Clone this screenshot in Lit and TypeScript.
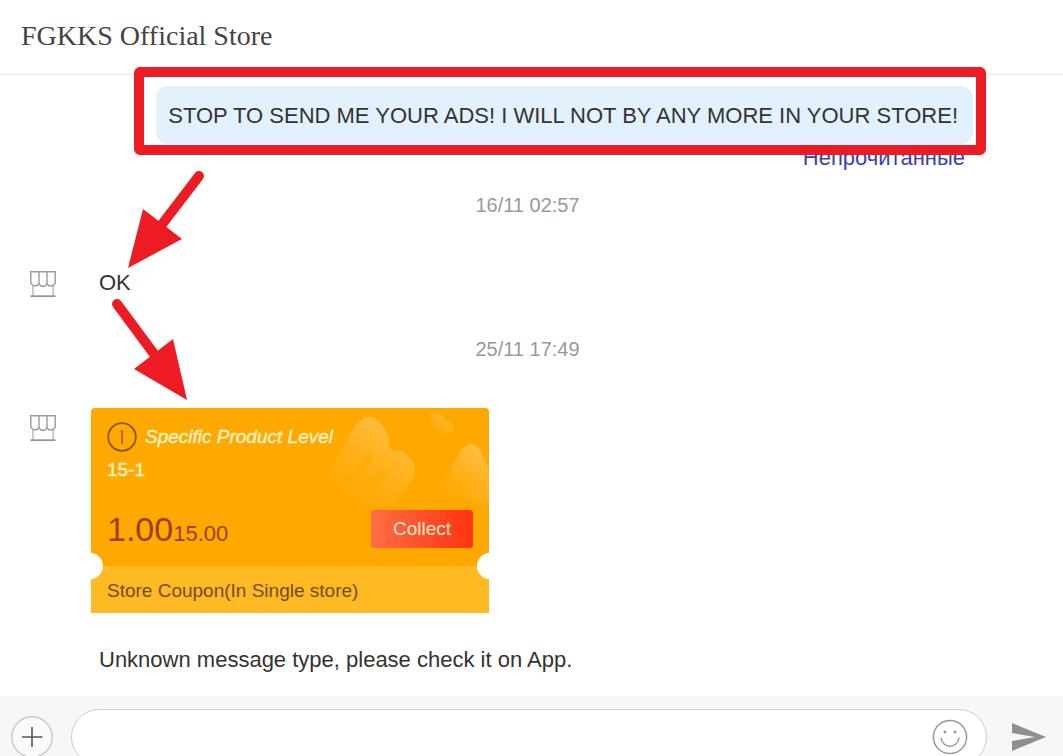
import { LitElement, html, css, svg } from "lit";
import { customElement, property } from "lit/decorators.js";

const storeIcon = html`<svg class="shop" viewBox="0 0 28 28" width="28" height="28" role="img" aria-label="Store">
  <g fill="none" stroke="#999" stroke-width="1.4">
    <path d="M1.800 1.800H26.200V13.500L23.500 15.800H20L18 13.800L15.800 16.200H12.200L10 13.800L8 15.800H4.500L1.800 13.500Z" />
    <path d="M10 2V13.500M18 2V13.500" />
    <path d="M4 15.800V26M24.200 15.800V26" stroke="#b5b5b5" />
    <path d="M1.500 26.200H26.500" stroke-width="1.8" />
  </g>
</svg>`;

@customElement("store-coupon")
export class StoreCoupon extends LitElement {
  @property() level = "";
  @property() code = "";
  @property() value = "";
  @property() minimum = "";
  @property() scope = "";

  static styles = css`
    :host {
      display: block;
      flex: 0 1 398px;
      color: #fff3c4;
      font-size: 19px;
      line-height: 24px;
    }
    .coupon {
      position: relative;
      background: #ffa800;
      border-radius: 4px 4px 0 0;
      overflow: hidden;
    }
    .decor {
      position: absolute;
      top: 0;
      right: 0;
    }
    .main {
      position: relative;
      padding: 14px 16px 12px;
    }
    .level {
      display: flex;
      align-items: center;
      gap: 8px;
      font-style: italic;
      -webkit-text-stroke: 0.4px currentColor;
    }
    .info {
      flex: none;
      display: block;
    }
    .code {
      padding: 6px 0 0;
      -webkit-text-stroke: 0.4px currentColor;
    }
    .deal {
      display: flex;
      justify-content: space-between;
      align-items: flex-end;
      padding-top: 28px;
    }
    .price {
      color: #9a3f00;
      font-size: 22px;
      line-height: 40px;
    }
    .amount {
      font-size: 34px;
      line-height: 34px;
    }
    .collect {
      width: 102px;
      height: 38px;
      margin: 0 0 6px;
      padding: 0;
      border: 0;
      border-radius: 3px;
      background: linear-gradient(90deg, #ff6d45, #ff3410);
      color: #ffeccb;
      font: inherit;
    }
    .scope {
      padding: 13px 16px 10px;
      background: #ffb923;
      color: #714d18;
    }
    .notch {
      position: absolute;
      bottom: 34px;
      width: 26px;
      height: 26px;
      border-radius: 50%;
      background: #fff;
    }
    .start {
      left: -14px;
    }
    .end {
      right: -14px;
    }
  `;

  render() {
    return html`<article class="coupon">
      <svg class="decor" width="160" height="110" viewBox="0 0 160 110" aria-hidden="true">
        <defs>
          <linearGradient id="fade" x1="0.75" y1="0.1" x2="0.25" y2="0.9">
            <stop offset="0" stop-color="#ffc044" stop-opacity=".9" />
            <stop offset="1" stop-color="#ffb52a" stop-opacity="0" />
          </linearGradient>
        </defs>
        <g fill="url(#fade)">
          <path d="M-8 76L25 20Q36 3 48 12Q56 18 60 30V40Q67 46 73 42L82 52Q90 62 82 73L64 96L32 104L2 92Z" />
          <path d="M101 5Q111 2 116 12Q126 15 124 24Q116 33 110 23L102 17Z" />
          <path d="M108 82L130 46Q140 28 151 42L160 62V98L126 92Z" />
        </g>
        <path d="M44 46Q37 43 26 62L15 80Q34 68 44 50ZM58 63Q51 58 38 76L27 92Q47 82 57 68Z" fill="#ffa800" opacity=".6" />
      </svg>
      <div class="main">
        <div class="level">
          <svg class="info" width="30" height="30" viewBox="0 0 30 30" aria-hidden="true">
            <g fill="none" stroke="#8a5500" stroke-width="1.8">
              <circle cx="15" cy="15" r="13.8" />
              <path d="M13.800 9H15V21H16" stroke-width="1.4" />
            </g>
          </svg>
          <span>${this.level}</span>
        </div>
        <div class="code">${this.code}</div>
        <div class="deal">
          <div class="price"><span class="amount">${this.value}</span>${this.minimum}</div>
          <button class="collect" type="button">Collect</button>
        </div>
      </div>
      <div class="scope">${this.scope}</div>
      <span class="notch start"></span><span class="notch end"></span>
    </article>`;
  }
}

@customElement("app-root")
export class AppRoot extends LitElement {
  static styles = css`
    :host {
      display: flex;
      flex-direction: column;
      height: 100vh;
      overflow: hidden;
      background: #fff;
      color: #333;
      font-family: "Liberation Sans", Arial, sans-serif;
      font-size: 22px;
      line-height: 24px;
    }
    .header {
      flex: none;
      padding: 20px 21px 21px;
      border-bottom: 2px solid #f0f0f0;
    }
    .title {
      margin: 0;
      color: #444;
      font: 400 28px/32px "Liberation Serif", "Times New Roman", serif;
    }
    .chat {
      position: relative;
      flex: none;
      padding: 11px 0 24px;
    }
    .sent {
      display: flex;
      flex-direction: column;
      align-items: flex-end;
      padding-right: 90px;
    }
    .bubble {
      position: relative;
      padding: 18px 15px 16px 12px;
      border-radius: 12px;
      background: #e3f0fd;
    }
    .highlight {
      position: absolute;
      inset: -19px -13px -11px -22px;
      border: 10px solid #ed1c24;
      border-radius: 6px;
    }
    .status {
      padding: 2px 8px 0;
      color: #3542b5;
    }
    .date {
      display: block;
      padding: 23px 8px 24px 0;
      color: #999;
      font-size: 20px;
      text-align: center;
    }
    .received {
      display: flex;
      align-items: flex-start;
      padding: 29px 29px 16px;
    }
    .last {
      padding: 23px 28px 0 29px;
    }
    .shop {
      flex: none;
    }
    .avatar {
      padding: 6px 0 0;
    }
    .text {
      margin: 0;
      padding: 1px 0 3px 42px;
    }
    store-coupon {
      margin-left: 34px;
    }
    .note {
      margin: 0;
      padding: 35px 28px 0 99px;
    }
    .arrows {
      position: absolute;
      left: 90px;
      top: 85px;
    }
    .composer {
      flex: none;
      display: flex;
      align-items: center;
      padding: 13px 16px 13px 11px;
      background: #f7f7f7;
    }
    .icon-button {
      flex: none;
      display: block;
      padding: 0;
      border: 0;
      background: none;
    }
    .field {
      flex: 1;
      display: flex;
      align-items: center;
      height: 54px;
      margin: 0 24px 0 18px;
      padding: 0 18px 0 28px;
      border: 1px solid #ccc;
      border-radius: 28px;
      background: #fff;
    }
    .input {
      flex: 1;
      min-width: 0;
      border: 0;
      outline: 0;
      background: none;
      font: inherit;
    }
    svg {
      display: block;
    }
  `;

  private arrow(tail: number[], neck: number[], head: string) {
    return svg`<path d="M${tail[0]} ${tail[1]}L${neck[0]} ${neck[1]}" stroke="#ed1c24" stroke-width="10" stroke-linecap="round" />
      <path d="${head}" fill="#ed1c24" />`;
  }

  render() {
    return html`
      <header class="header"><h1 class="title">FGKKS Official Store</h1></header>
      <main class="chat">
        <div class="sent">
          <div class="bubble">
            STOP TO SEND ME YOUR ADS! I WILL NOT BY ANY MORE IN YOUR STORE!
            <span class="highlight"></span>
          </div>
          <div class="status">Непрочитанные</div>
        </div>
        <time class="date">16/11 02:57</time>
        <div class="received">
          ${storeIcon}
          <p class="text">OK</p>
        </div>
        <time class="date">25/11 17:49</time>
        <div class="received last">
          <div class="avatar">${storeIcon}</div>
          <store-coupon
            level="Specific Product Level"
            code="15-1"
            value="1.00"
            minimum="15.00"
            scope="Store Coupon(In Single store)"
          ></store-coupon>
        </div>
        <p class="note">Unknown message type, please check it on App.</p>
        <svg class="arrows" width="120" height="250" viewBox="90 160 120 250" aria-hidden="true">
          ${this.arrow([199, 176], [160, 227], "M128 268L143 209L182 239Z")}
          ${this.arrow([117, 304], [157, 358], "M187 400L173 339L134 369Z")}
        </svg>
      </main>
      <form class="composer" @submit=${(e: Event) => e.preventDefault()}>
        <button class="icon-button" type="button" aria-label="Add attachment">
          <svg width="42" height="42" viewBox="0 0 42 42" fill="none">
            <circle cx="21" cy="21" r="20.2" fill="#fafafa" stroke="#c8c8c8" stroke-width="1.4" />
            <path d="M11 21H31.500M21 11V31" stroke="#555" stroke-width="1.6" />
          </svg>
        </button>
        <div class="field">
          <input class="input" type="text" aria-label="Message" />
          <button class="icon-button" type="button" aria-label="Emoji">
            <svg width="36" height="36" viewBox="0 0 36 36" fill="none" stroke="#999" stroke-width="1.5">
              <circle cx="18" cy="18" r="16.6" />
              <path d="M9 18.500C10 30 26 30 27 18.500" />
              <circle cx="13" cy="13" r="1.500" fill="#999" stroke="none" />
              <circle cx="23" cy="13" r="1.500" fill="#999" stroke="none" />
            </svg>
          </button>
        </div>
        <button class="icon-button" type="submit" aria-label="Send">
          <svg width="36" height="28" viewBox="0 0 36 28">
            <path d="M1 0L35 14L1 28V18L24 14L1 10Z" fill="#8f8f8f" />
          </svg>
        </button>
      </form>
    `;
  }
}
